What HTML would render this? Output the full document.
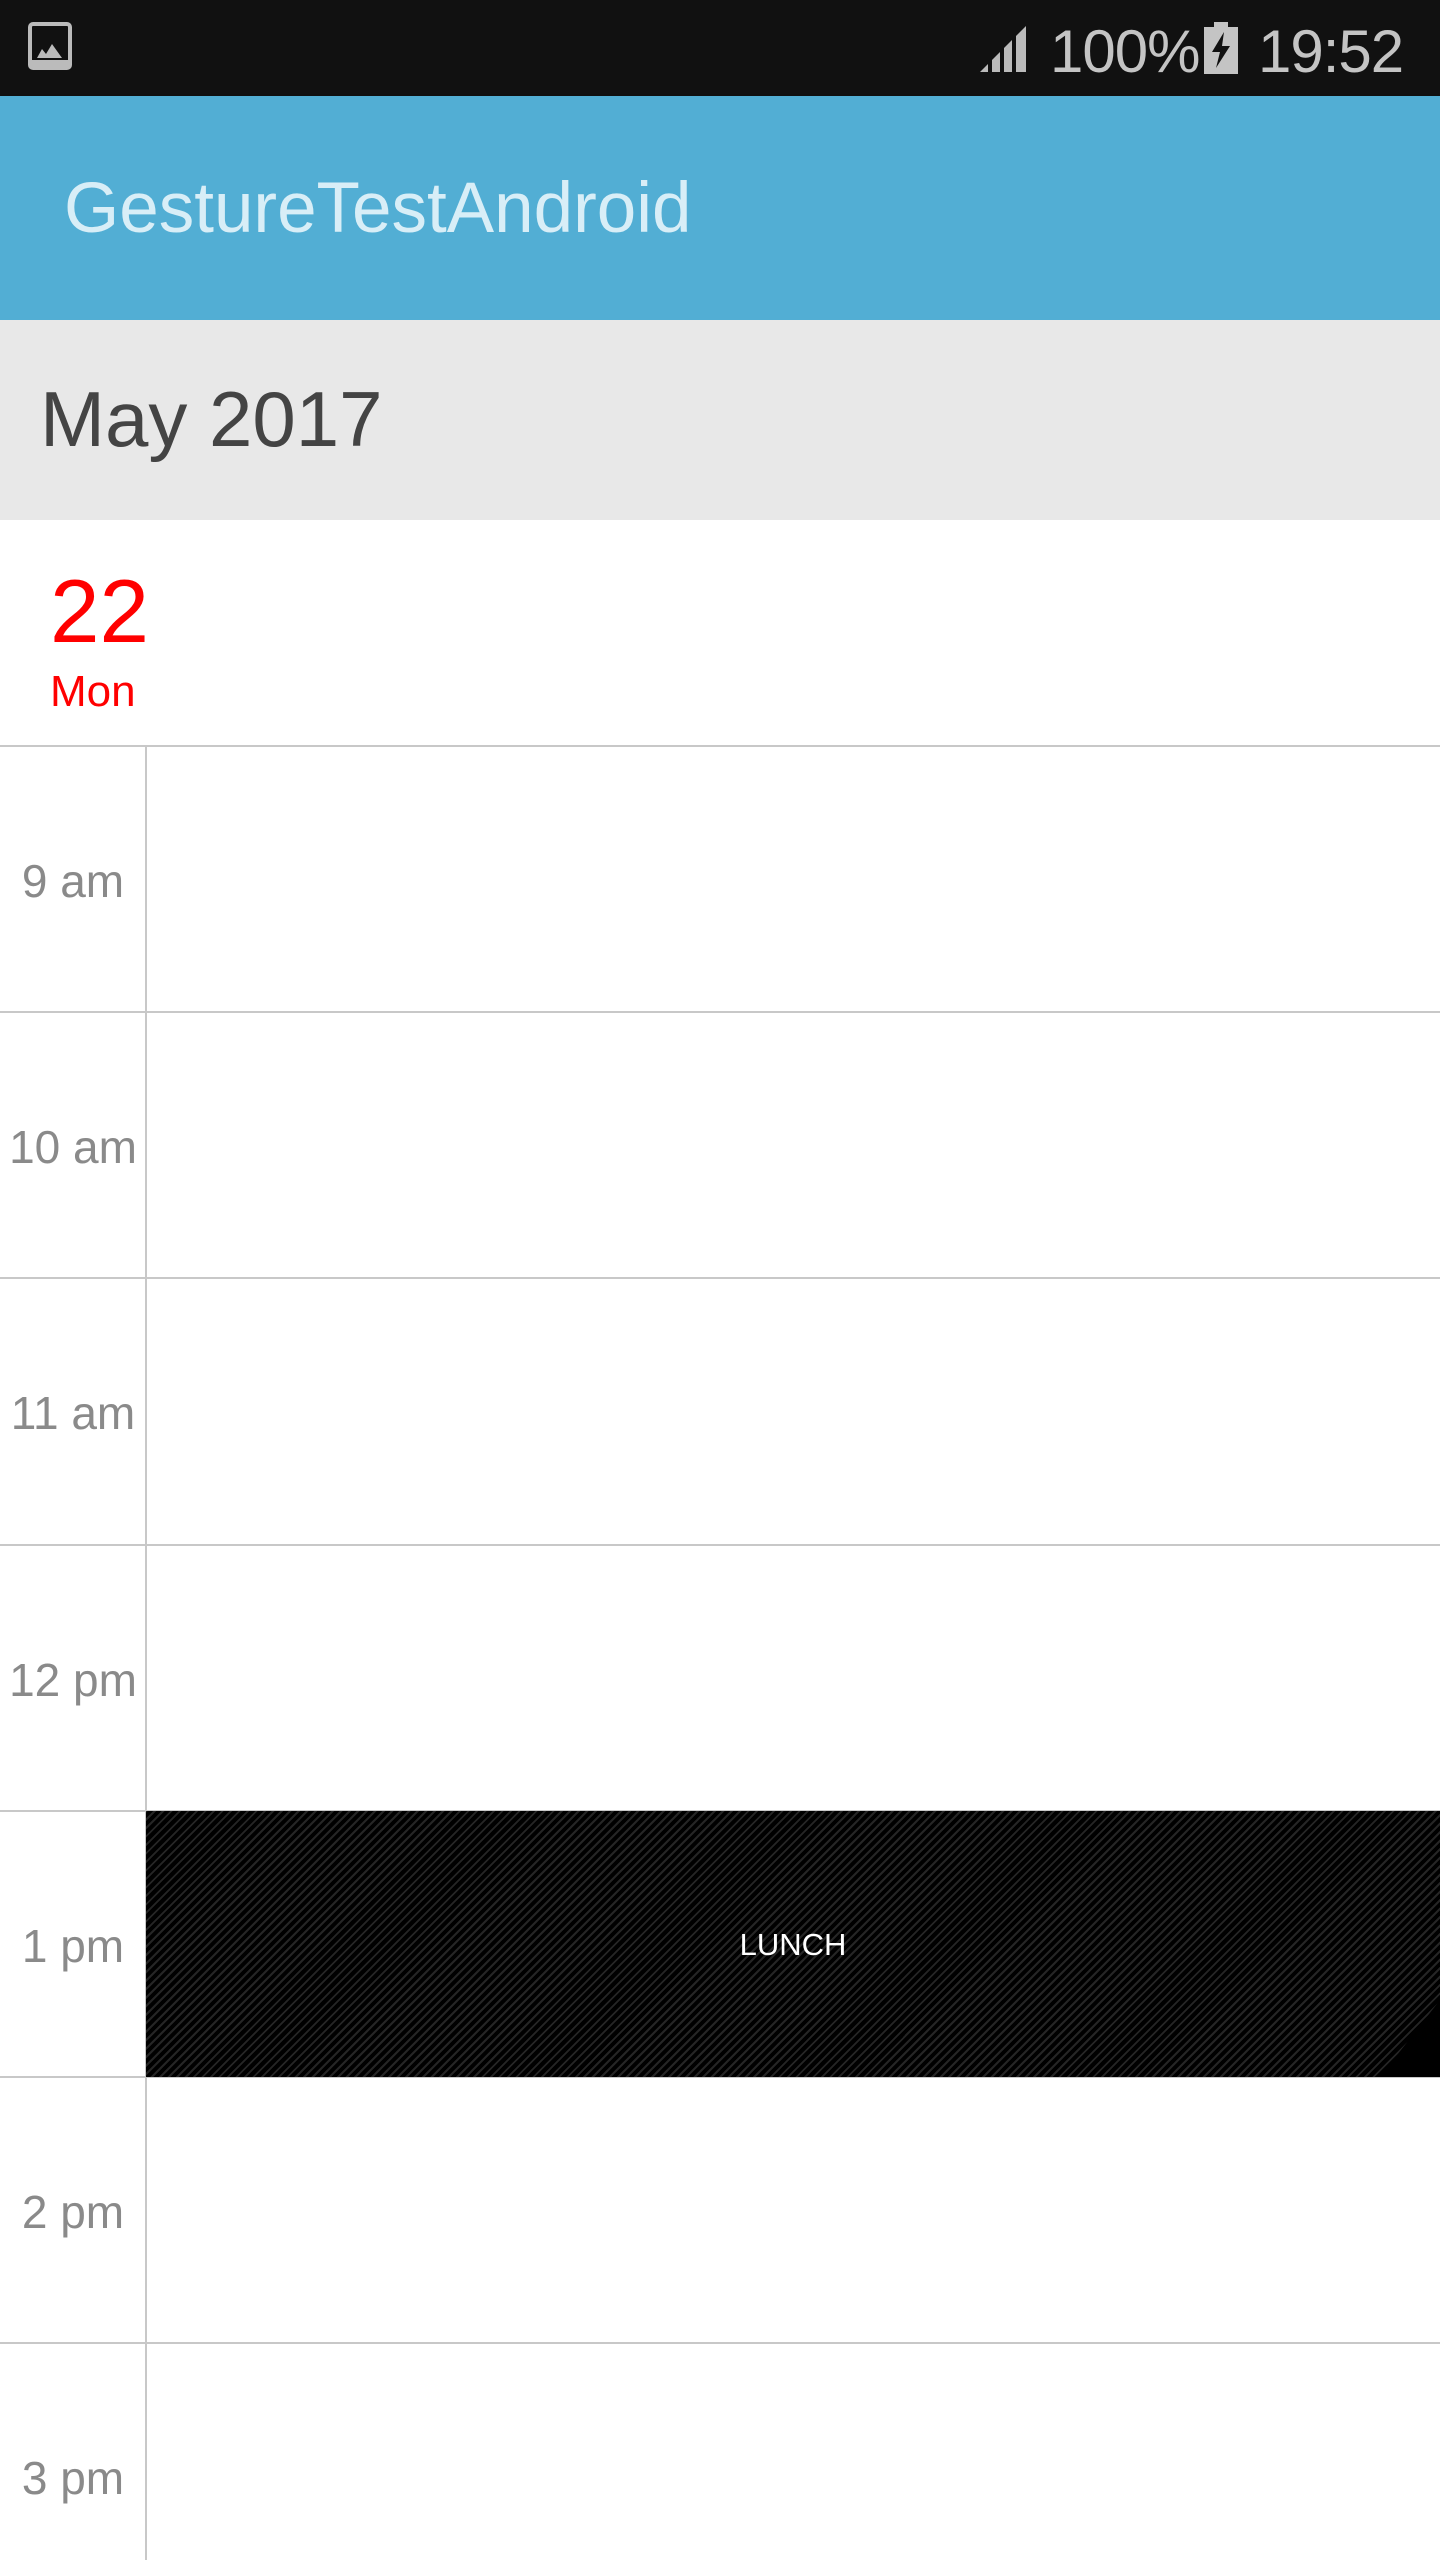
<!DOCTYPE html>
<html><head><meta charset="utf-8"><style>
*{margin:0;padding:0;box-sizing:border-box}
body{width:1440px;height:2560px;overflow:hidden;background:#fff;font-family:"Liberation Sans",sans-serif;position:relative}
.abs{position:absolute}
.sb{left:0;top:0;width:1440px;height:96px;background:#111}
.ab{left:0;top:96px;width:1440px;height:224px;background:#52aed4;box-shadow:0 2px 3px rgba(0,0,0,.25)}
.mh{left:0;top:320px;width:1440px;height:200px;background:#e8e8e8}
.t{white-space:nowrap;line-height:1}
.hl{left:0;width:1440px;height:2px;background:#c8c8c8}
.lbl{left:0;width:146px;text-align:center;font-size:46px;color:#8a8a8a}
</style></head><body>
<div class="abs sb"></div>
<svg class="abs" style="left:28px;top:22px" width="46" height="50" viewBox="0 0 46 50"><rect x="2" y="2" width="40" height="44" rx="3" fill="none" stroke="#bbb" stroke-width="4"/><rect x="2" y="38" width="40" height="8" fill="#bbb"/><path d="M9 36 L14 27 L18 32 L24 22 L34 36 Z" fill="#bbb"/></svg>
<svg class="abs" style="left:978px;top:22px" width="52" height="52" viewBox="0 0 52 52"><path d="M2 50 L10 42 V50Z M14 50 V38 L22 30 V50Z M26 50 V26 L34 18 V50Z M38 50 V14 L48 4 V50Z" fill="#bbb"/></svg>
<div class="abs t" style="left:1050px;top:22px;font-size:60px;color:#c4c4c4;letter-spacing:-1px">100%</div>
<svg class="abs" style="left:1204px;top:22px" width="34" height="52" viewBox="0 0 34 52"><rect x="10" y="0" width="14" height="6" fill="#c4c4c4"/><rect x="0" y="5" width="34" height="47" fill="#c4c4c4"/><path d="M20 10 L8 30 H16 L12 46 L26 24 H18 Z" fill="#111"/></svg>
<div class="abs t" style="left:1258px;top:22px;font-size:60px;color:#c4c4c4;letter-spacing:-1px">19:52</div>
<div class="abs ab"></div>
<div class="abs t" style="left:64px;top:173px;font-size:71px;color:#d8eef7;letter-spacing:0px">GestureTestAndroid</div>
<div class="abs mh"></div>
<div class="abs t" style="left:40px;top:380px;font-size:78px;color:#444">May 2017</div>
<div class="abs t" style="left:50px;top:567px;font-size:89px;color:#f00">22</div>
<div class="abs t" style="left:50px;top:670px;font-size:44px;color:#f00">Mon</div>
<div class="abs hl" style="top:745px"></div>
<div class="abs hl" style="top:1011px"></div>
<div class="abs hl" style="top:1277px"></div>
<div class="abs hl" style="top:1544px"></div>
<div class="abs hl" style="top:1810px"></div>
<div class="abs hl" style="top:2076px"></div>
<div class="abs hl" style="top:2342px"></div>
<div class="abs" style="left:145px;top:746px;width:2px;height:1814px;background:#c8c8c8"></div>
<div class="abs" style="left:146px;top:1811px;width:1294px;height:266px;background:#000 repeating-linear-gradient(-45deg,#000 0,#000 4px,#252525 4px,#252525 6px)"></div>
<div class="abs" style="left:1380px;top:2000px;width:60px;height:77px;background:#000;clip-path:polygon(100% 0,100% 100%,0 100%)"></div>
<div class="abs t" style="left:146px;width:1294px;top:1929px;text-align:center;font-size:31px;color:#fff">LUNCH</div>
<div class="abs t lbl" style="top:858px">9 am</div>
<div class="abs t lbl" style="top:1124px">10 am</div>
<div class="abs t lbl" style="top:1390px">11 am</div>
<div class="abs t lbl" style="top:1657px">12 pm</div>
<div class="abs t lbl" style="top:1923px">1 pm</div>
<div class="abs t lbl" style="top:2189px">2 pm</div>
<div class="abs t lbl" style="top:2455px">3 pm</div>
</body></html>
